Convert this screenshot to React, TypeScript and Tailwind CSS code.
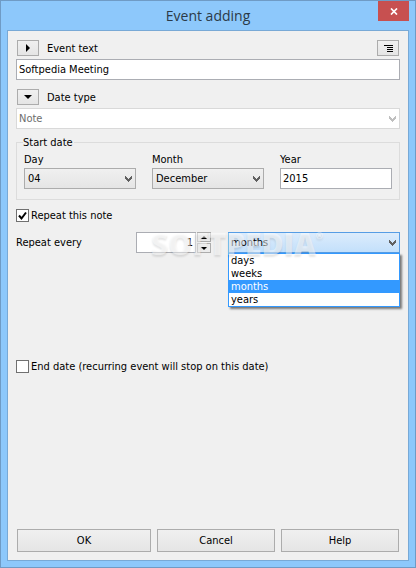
import { useState, type ReactNode } from "react";
import { clsx } from "clsx";

const MONTHS = [
  "January",
  "February",
  "March",
  "April",
  "May",
  "June",
  "July",
  "August",
  "September",
  "October",
  "November",
  "December",
];
const DAYS = Array.from({ length: 31 }, (_, i) => String(i + 1).padStart(2, "0"));
const UNITS = ["days", "weeks", "months", "years"];

const fieldClass = "block h-[21px] w-full border border-[#abadb3] bg-white px-[2px] text-black outline-none";
const smallButtonClass =
  "flex h-4 w-[22px] items-center justify-center border border-[#acacac] bg-linear-to-b from-[#f0f0f0] to-[#e5e5e5]";

function Chevron({ className }: { className: string }) {
  return (
    <svg
      viewBox="0 0 7 6"
      className={clsx("pointer-events-none absolute top-2 right-1 h-[6px] w-[7px]", className)}
      shapeRendering="crispEdges"
      fill="currentColor"
      aria-hidden="true"
    >
      <path d="M0 0h1v1h1v1h1v1h1v-1h1v-1h1v-1h1v3h-1v1h-1v1h-1v1h-1v-1h-1v-1h-1v-1h-1z" />
    </svg>
  );
}

interface ComboProps {
  id: string;
  options: string[];
  value: string;
  onChange: (value: string) => void;
  variant?: "normal" | "open" | "disabled";
  children?: ReactNode;
}

function Combo({ id, options, value, onChange, variant = "normal", children }: ComboProps) {
  return (
    <div className="relative">
      <select
        id={id}
        value={value}
        disabled={variant === "disabled"}
        onChange={(e) => onChange(e.target.value)}
        className={clsx(
          "block h-[21px] w-full appearance-none border opacity-100 outline-none",
          variant === "normal" && "border-[#acacac] bg-linear-to-b from-[#f0f0f0] to-[#e5e5e5] px-[3px]",
          variant === "open" && "border-[#569de5] bg-linear-to-b from-[#dcecfc] to-[#c3e0fb] px-[2px]",
          variant === "disabled" && "border-[#d9d9d9] bg-white px-[2px] text-[#6d6d6d]",
        )}
      >
        {options.map((option) => (
          <option key={option}>{option}</option>
        ))}
      </select>
      <Chevron className={variant === "disabled" ? "text-[#bfbfbf]" : "text-[#606060]"} />
      {children}
    </div>
  );
}

interface CheckProps {
  label: string;
  checked: boolean;
  onChange: (checked: boolean) => void;
}

function Check({ label, checked, onChange }: CheckProps) {
  return (
    <label className="flex h-[13px] items-center gap-[2px]">
      <span className="relative block size-[13px]">
        <input
          type="checkbox"
          checked={checked}
          onChange={(e) => onChange(e.target.checked)}
          className="block size-[13px] appearance-none border border-[#707070] bg-white"
        />
        {checked && (
          <svg viewBox="0 0 13 13" className="pointer-events-none absolute inset-0" aria-hidden="true">
            <path d="M3 6.5 L5.5 9.5 L10 3.5" fill="none" stroke="#000" strokeWidth="2" />
          </svg>
        )}
      </span>
      {label}
    </label>
  );
}

export default function App() {
  const [text, setText] = useState("Softpedia Meeting");
  const [type, setType] = useState("Note");
  const [day, setDay] = useState("04");
  const [month, setMonth] = useState("December");
  const [year, setYear] = useState("2015");
  const [repeat, setRepeat] = useState(true);
  const [every, setEvery] = useState(1);
  const [unit, setUnit] = useState("months");
  const [hasEnd, setHasEnd] = useState(false);

  return (
    <div className="flex min-h-screen flex-col border border-[#6f9bc5] bg-[#8dc8fb] px-[6px] pb-[6px] font-['DejaVu_Sans_Condensed','Noto_Sans',sans-serif] text-[11px] leading-[13px] text-black">
      {/* Title bar */}
      <header className="relative flex h-[29px] items-center justify-center">
        <h1 className="font-['Open_Sans',sans-serif] text-[14px] leading-5 text-[#2b3a48]">Event adding</h1>
        <button
          type="button"
          aria-label="Close"
          className="absolute top-0 right-0 flex h-5 w-[31px] items-center justify-center bg-[#c75050]"
        >
          <svg viewBox="0 0 8 7" className="h-[7px] w-2" aria-hidden="true">
            <path d="M1 0.5 L7 6.5 M7 0.5 L1 6.5" stroke="#fff" strokeWidth="1.7" />
          </svg>
        </button>
      </header>

      <main className="flex flex-1 flex-col border border-[#78a9d6] bg-[#f0f0f0] px-2 pt-[9px] pb-2">
        <div className="flex items-center px-px">
          <button type="button" aria-label="Expand event text" className={smallButtonClass}>
            <svg viewBox="0 0 4 8" className="h-2 w-1" aria-hidden="true">
              <path d="M0 0 L4 4 L0 8z" />
            </svg>
          </button>
          <label htmlFor="event-text" className="ml-2">
            Event text
          </label>
          <button type="button" aria-label="Text options" className={clsx(smallButtonClass, "ml-auto")}>
            <svg viewBox="0 0 9 7" className="h-[7px] w-[9px]" shapeRendering="crispEdges" aria-hidden="true">
              <path d="M0 0h9v1h-9z M3 2h6v1h-6z M3 4h6v1h-6z M3 6h6v1h-6z" />
            </svg>
          </button>
        </div>
        <div className="mt-[3px]">
          <input id="event-text" value={text} onChange={(e) => setText(e.target.value)} className={fieldClass} />
        </div>

        <div className="mt-[9px] flex items-center px-px">
          <button type="button" aria-label="Collapse date type" className={smallButtonClass}>
            <svg viewBox="0 0 8 4" className="h-1 w-2" aria-hidden="true">
              <path d="M0 0 H8 L4 4z" />
            </svg>
          </button>
          <label htmlFor="date-type" className="ml-2">
            Date type
          </label>
        </div>
        <div className="mt-[3px]">
          <Combo id="date-type" options={["Note"]} value={type} onChange={setType} variant="disabled" />
        </div>

        <fieldset className="mt-[7px] border border-[#dcdcdc] px-[7px] pb-[10px]">
          <legend className="-ml-px pr-px">Start date</legend>
          <div className="mt-1 grid grid-cols-3 gap-4">
            <div>
              <label htmlFor="day" className="mb-[2px] block">
                Day
              </label>
              <Combo id="day" options={DAYS} value={day} onChange={setDay} />
            </div>
            <div>
              <label htmlFor="month" className="mb-[2px] block">
                Month
              </label>
              <Combo id="month" options={MONTHS} value={month} onChange={setMonth} />
            </div>
            <div>
              <label htmlFor="year" className="mb-[2px] block">
                Year
              </label>
              <input id="year" value={year} onChange={(e) => setYear(e.target.value)} className={fieldClass} />
            </div>
          </div>
        </fieldset>

        <div className="mt-[9px]">
          <Check label="Repeat this note" checked={repeat} onChange={setRepeat} />
        </div>

        {/* Repeat interval */}
        <div className="relative mt-[10px] flex items-center">
          <label htmlFor="every" className="w-[120px]">
            Repeat every
          </label>
          <div className="w-[60px]">
            <input
              id="every"
              value={every}
              onChange={(e) => setEvery(Number(e.target.value) || 0)}
              className={clsx(fieldClass, "text-right")}
            />
          </div>
          <div className="ml-px flex w-[14px] flex-col gap-px">
            <button
              type="button"
              aria-label="Increase"
              onClick={() => setEvery(every + 1)}
              className="flex h-[10px] items-center justify-center border border-[#acacac] bg-[#ececec]"
            >
              <svg viewBox="0 0 6 3" className="h-[3px] w-[6px]" aria-hidden="true">
                <path d="M0 3 L3 0 L6 3z" />
              </svg>
            </button>
            <button
              type="button"
              aria-label="Decrease"
              onClick={() => setEvery(Math.max(1, every - 1))}
              className="flex h-[10px] items-center justify-center border border-[#acacac] bg-[#ececec]"
            >
              <svg viewBox="0 0 6 3" className="h-[3px] w-[6px]" aria-hidden="true">
                <path d="M0 0 L3 3 L6 0z" />
              </svg>
            </button>
          </div>
          <div className="ml-[17px] flex-1">
            <Combo id="unit" options={UNITS} value={unit} onChange={setUnit} variant="open">
              <ul
                role="listbox"
                aria-label="Repeat unit"
                className="absolute top-full right-0 left-0 border border-[#3399ff] bg-white shadow-[2px_2px_2px_rgba(0,0,0,0.5)]"
              >
                {UNITS.map((option) => (
                  <li
                    key={option}
                    role="option"
                    aria-selected={option === unit}
                    onClick={() => setUnit(option)}
                    className={clsx("h-[13px] px-[2px]", option === unit && "bg-[#3399ff] text-white")}
                  >
                    {option}
                  </li>
                ))}
              </ul>
            </Combo>
          </div>
          {/* Watermark */}
          <div className="pointer-events-none absolute top-0 left-[135px] flex items-start font-['Open_Sans',sans-serif] text-[30px] leading-[24px] font-extrabold text-white/50 [text-shadow:0px_2px_2px_rgba(0,0,0,0.1)]">
            SOFTPEDIA<span className="text-[9px] leading-[8px]">®</span>
          </div>
        </div>

        <div className="mt-[107px]">
          <Check label="End date (recurring event will stop on this date)" checked={hasEnd} onChange={setHasEnd} />
        </div>

        <footer className="mt-auto grid grid-cols-[134fr_118fr_118fr] gap-[6px] px-px">
          {["OK", "Cancel", "Help"].map((label) => (
            <button
              key={label}
              type="button"
              className="h-[23px] border border-[#acacac] bg-linear-to-b from-[#f0f0f0] to-[#e5e5e5]"
            >
              {label}
            </button>
          ))}
        </footer>
      </main>
    </div>
  );
}
